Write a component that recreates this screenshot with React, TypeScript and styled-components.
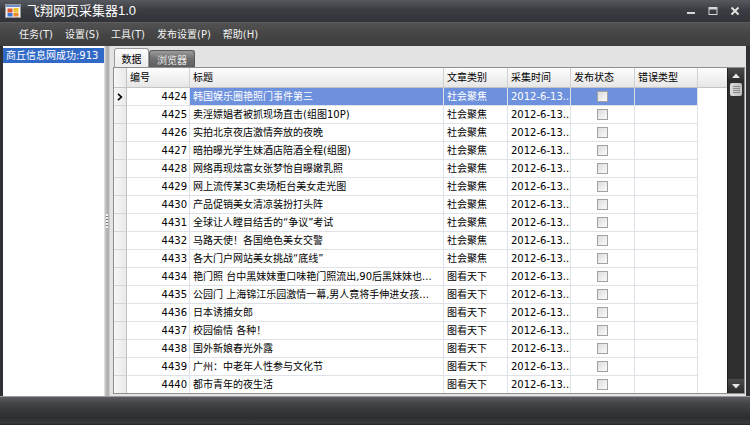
import React from "react";
import styled, { createGlobalStyle } from "styled-components";

const GlobalStyle = createGlobalStyle`
  html, body { margin: 0; padding: 0; background: #2b2c30; }
  body { font-family: "DejaVu Sans", "Noto Sans CJK SC", sans-serif; }
  * { box-sizing: border-box; }
`;

const Window = styled.div`
  width: 750px;
  height: 425px;
  display: flex;
  flex-direction: column;
  background: #303135;
  overflow: hidden;
`;

const TitleBar = styled.div`
  height: 22px;
  flex: none;
  display: flex;
  align-items: center;
  padding-left: 5px;
  background: linear-gradient(#56595f, #3b3d42 45%, #313338);
`;

const TitleText = styled.span`
  margin-left: 6px;
  color: #ffffff;
  font: 13px "Liberation Sans", "Noto Sans CJK SC", sans-serif;
  line-height: 22px;
`;

const WinButtons = styled.div`
  margin-left: auto;
  display: flex;
  padding-right: 4px;
`;

const WinButton = styled.div`
  width: 22px;
  height: 22px;
  display: flex;
  align-items: center;
  justify-content: center;
`;

const MenuBar = styled.div`
  height: 24px;
  flex: none;
  display: flex;
  align-items: center;
  padding-left: 13px;
  background: linear-gradient(#525252, #454545 50%, #3d3d3d);
  border-top: 1px solid #5e5e5e;
`;

const MenuItem = styled.span`
  padding: 0 6px;
  color: #f2f2f2;
  font-size: 10px;
  line-height: 20px;
  white-space: nowrap;
`;

const Body = styled.div`
  height: 350px;
  flex: none;
  display: flex;
  padding: 0 4px 0 3px;
`;

const LeftPanel = styled.div`
  width: 101px;
  flex: none;
  background: #ffffff;
  padding-top: 2px;
`;

const ListItem = styled.div<{ $selected?: boolean }>`
  height: 15px;
  line-height: 15px;
  padding-left: 3px;
  font-size: 10px;
  white-space: nowrap;
  overflow: hidden;
  color: ${(p) => (p.$selected ? "#ffffff" : "#000000")};
  background: ${(p) => (p.$selected ? "#3169c6" : "transparent")};
`;

const Splitter = styled.div`
  width: 6px;
  flex: none;
  display: flex;
  align-items: center;
  justify-content: center;
  background: linear-gradient(to right, #ececec, #bdbdbd 30%, #a9a9a9 70%, #dcdcdc);
`;

const Grip = styled.div`
  width: 2px;
  height: 14px;
  background: repeating-linear-gradient(#f4f4f4 0 2px, #777777 2px 3px);
`;

const TabArea = styled.div`
  flex: 1;
  display: flex;
  flex-direction: column;
  background: #e3e3e3;
  padding: 2px 1px 2px 3px;
`;

const TabStrip = styled.div`
  height: 19px;
  flex: none;
  display: flex;
  align-items: flex-end;
  padding-left: 1px;
`;

const Tab = styled.div<{ $active?: boolean }>`
  width: ${(p) => (p.$active ? "35px" : "46px")};
  height: ${(p) => (p.$active ? "19px" : "17px")};
  display: flex;
  align-items: center;
  justify-content: center;
  font-size: 10px;
  border-radius: 3px 3px 0 0;
  border: 1px solid ${(p) => (p.$active ? "#9a9a9a" : "#5a5a5a")};
  border-bottom: none;
  color: ${(p) => (p.$active ? "#000000" : "#e6e6e6")};
  background: ${(p) =>
    p.$active
      ? "linear-gradient(#fbfbfb, #ececec)"
      : "linear-gradient(#9a9a9a, #6e6e6e 50%, #5f5f5f)"};
`;

const GridFrame = styled.div`
  flex: 1;
  display: flex;
  border: 1px solid #8e8e8e;
  background: #ffffff;
  overflow: hidden;
`;

const TableArea = styled.div`
  flex: 1;
  display: flex;
  flex-direction: column;
  overflow: hidden;
`;

const Row = styled.div<{ $header?: boolean }>`
  display: grid;
  grid-template-columns: 13px 63px 254px 64px 63px 64px 63px 1fr;
  height: ${(p) => (p.$header ? "20px" : "18px")};
  flex: none;
`;

const HeaderCell = styled.div<{ $filler?: boolean }>`
  font-size: 10px;
  line-height: 19px;
  padding-left: 3px;
  white-space: nowrap;
  color: #000000;
  background: linear-gradient(#fdfdfd, #f0f0f0 60%, #e6e6e6);
  border-right: 1px solid ${(p) => (p.$filler ? "transparent" : "#d2d2d2")};
  border-bottom: 1px solid #c4c4c4;
`;

const RowHead = styled.div<{ $header?: boolean }>`
  display: flex;
  align-items: center;
  justify-content: center;
  background: linear-gradient(to right, #f7f7f7, #e9e9e9);
  border-right: 1px solid #c2c2c2;
  border-bottom: 1px solid ${(p) => (p.$header ? "#c4c4c4" : "#d6d6d6")};
`;

const Cell = styled.div<{ $selected?: boolean; $align?: "left" | "right" | "center" }>`
  font-size: 10px;
  line-height: 17px;
  white-space: nowrap;
  overflow: hidden;
  padding: ${(p) => (p.$align === "right" ? "0 2px 0 0" : p.$align === "center" ? "0" : "0 0 0 3px")};
  text-align: ${(p) => p.$align || "left"};
  display: ${(p) => (p.$align === "center" ? "flex" : "block")};
  align-items: center;
  justify-content: center;
  color: ${(p) => (p.$selected ? "#ffffff" : "#000000")};
  background: ${(p) => (p.$selected ? "#6d91dc" : "#ffffff")};
  border-right: 1px solid #dfe2e8;
  border-bottom: 1px solid #dfe2e8;
`;

const Filler = styled.div`
  background: #ffffff;
`;

const Check = styled.div`
  width: 11px;
  height: 11px;
  border: 1px solid #a2a2a2;
  background: linear-gradient(135deg, #dcdcdc, #fbfbfb);
`;

const ScrollBar = styled.div`
  width: 17px;
  flex: none;
  display: flex;
  flex-direction: column;
  background: #2f2f2f;
  border-left: 1px solid #1f1f1f;
`;

const ScrollButton = styled.div`
  height: 14px;
  flex: none;
  display: flex;
  align-items: center;
  justify-content: center;
  background: linear-gradient(#4a4a4a, #2c2c2c);
`;

const Thumb = styled.div`
  height: 13px;
  margin: 1px 2px 0;
  flex: none;
  border-radius: 2px;
  display: flex;
  align-items: center;
  justify-content: center;
  background: linear-gradient(to right, #dcdcdc, #bcbcbc);
`;

const ThumbGrip = styled.div`
  width: 7px;
  height: 7px;
  background: repeating-linear-gradient(#8a8a8a 0 1px, transparent 1px 2px);
`;

const Track = styled.div`
  flex: 1;
`;

const StatusBar = styled.div`
  flex: 1;
  border-top: 1px solid #9a9a9a;
  background: linear-gradient(#5b5c60, #414246 25%, #2c2d31 75%, #3a3b3f 92%, #232427);
`;

type Item = { id: number; title: string; cat: string };

const rows: Item[] = [
  { id: 4424, title: "韩国娱乐圈艳照门事件第三", cat: "社会聚焦" },
  { id: 4425, title: "卖淫嫖娼者被抓现场直击(组图10P)", cat: "社会聚焦" },
  { id: 4426, title: "实拍北京夜店激情奔放的夜晚", cat: "社会聚焦" },
  { id: 4427, title: "暗拍曝光学生妹酒店陪酒全程(组图)", cat: "社会聚焦" },
  { id: 4428, title: "网络再现炫富女张梦怡自曝嫩乳照", cat: "社会聚焦" },
  { id: 4429, title: "网上流传某3C卖场柜台美女走光图", cat: "社会聚焦" },
  { id: 4430, title: "产品促销美女清凉装扮打头阵", cat: "社会聚焦" },
  { id: 4431, title: "全球让人瞠目结舌的“争议”考试", cat: "社会聚焦" },
  { id: 4432, title: "马路天使！各国绝色美女交警", cat: "社会聚焦" },
  { id: 4433, title: "各大门户网站美女挑战“底线”", cat: "社会聚焦" },
  { id: 4434, title: "艳门照 台中黑妹妹重口味艳门照流出,90后黑妹妹也...", cat: "图看天下" },
  { id: 4435, title: "公园门 上海锦江乐园激情一幕,男人竟将手伸进女孩...", cat: "图看天下" },
  { id: 4436, title: "日本诱捕女郎", cat: "图看天下" },
  { id: 4437, title: "校园偷情 各种！", cat: "图看天下" },
  { id: 4438, title: "国外新娘春光外露", cat: "图看天下" },
  { id: 4439, title: "广州：中老年人性参与文化节", cat: "图看天下" },
  { id: 4440, title: "都市青年的夜生活", cat: "图看天下" },
];

const AppIcon = () => (
  <svg width="16" height="16" viewBox="0 0 16 16">
    <rect x="0.5" y="1.5" width="15" height="13" fill="#f4f4f4" stroke="#9a9a9a" />
    <rect x="1" y="2" width="14" height="2" fill="#6d8fc9" />
    <rect x="2.5" y="5.5" width="5" height="4" fill="#e4572e" />
    <rect x="8.5" y="5" width="5" height="4.5" fill="#f2c230" />
    <rect x="2.5" y="10" width="5" height="3.5" fill="#3a74d0" />
    <rect x="8.5" y="10" width="5" height="3.5" fill="#f08a2a" />
  </svg>
);

export default function App() {
  return (
    <>
      <GlobalStyle />
      <Window>
        <TitleBar>
          <AppIcon />
          <TitleText>飞翔网页采集器1.0</TitleText>
          <WinButtons>
            <WinButton>
              <svg width="10" height="10" viewBox="0 0 10 10">
                <rect x="1" y="6" width="8" height="2" fill="#d6d6d6" />
              </svg>
            </WinButton>
            <WinButton>
              <svg width="10" height="10" viewBox="0 0 10 10">
                <rect x="1" y="1.5" width="8" height="7" fill="none" stroke="#d6d6d6" strokeWidth="1" />
                <rect x="1" y="1.5" width="8" height="2" fill="#d6d6d6" />
              </svg>
            </WinButton>
            <WinButton>
              <svg width="10" height="10" viewBox="0 0 10 10">
                <path d="M1.5 1.5 L8.5 8.5 M8.5 1.5 L1.5 8.5" stroke="#e0e0e0" strokeWidth="2" />
              </svg>
            </WinButton>
          </WinButtons>
        </TitleBar>
        <MenuBar>
          <MenuItem>任务(T)</MenuItem>
          <MenuItem>设置(S)</MenuItem>
          <MenuItem>工具(T)</MenuItem>
          <MenuItem>发布设置(P)</MenuItem>
          <MenuItem>帮助(H)</MenuItem>
        </MenuBar>
        <Body>
          <LeftPanel>
            <ListItem $selected>商丘信息网成功:913</ListItem>
          </LeftPanel>
          <Splitter>
            <Grip />
          </Splitter>
          <TabArea>
            <TabStrip>
              <Tab $active>数据</Tab>
              <Tab>浏览器</Tab>
            </TabStrip>
            <GridFrame>
              <TableArea>
                <Row $header>
                  <RowHead $header />
                  <HeaderCell>编号</HeaderCell>
                  <HeaderCell>标题</HeaderCell>
                  <HeaderCell>文章类别</HeaderCell>
                  <HeaderCell>采集时间</HeaderCell>
                  <HeaderCell>发布状态</HeaderCell>
                  <HeaderCell>错误类型</HeaderCell>
                  <HeaderCell $filler />
                </Row>
                {rows.map((r, i) => {
                  const sel = i === 0;
                  return (
                    <Row key={r.id}>
                      <RowHead>
                        {sel && (
                          <svg width="6" height="8" viewBox="0 0 6 8">
                            <path d="M1 0.8 L4.4 4 L1 7.2" fill="none" stroke="#000" strokeWidth="1.6" />
                          </svg>
                        )}
                      </RowHead>
                      <Cell $align="right">{r.id}</Cell>
                      <Cell $selected={sel}>{r.title}</Cell>
                      <Cell $selected={sel}>{r.cat}</Cell>
                      <Cell $selected={sel}>2012-6-13...</Cell>
                      <Cell $selected={sel} $align="center">
                        <Check />
                      </Cell>
                      <Cell $selected={sel} />
                      <Filler />
                    </Row>
                  );
                })}
              </TableArea>
              <ScrollBar>
                <ScrollButton>
                  <svg width="8" height="5" viewBox="0 0 8 5">
                    <path d="M0 5 L4 0.5 L8 5 Z" fill="#e8e8e8" />
                  </svg>
                </ScrollButton>
                <Thumb>
                  <ThumbGrip />
                </Thumb>
                <Track />
                <ScrollButton>
                  <svg width="8" height="5" viewBox="0 0 8 5">
                    <path d="M0 0 L4 4.5 L8 0 Z" fill="#e8e8e8" />
                  </svg>
                </ScrollButton>
              </ScrollBar>
            </GridFrame>
          </TabArea>
        </Body>
        <StatusBar />
      </Window>
    </>
  );
}
